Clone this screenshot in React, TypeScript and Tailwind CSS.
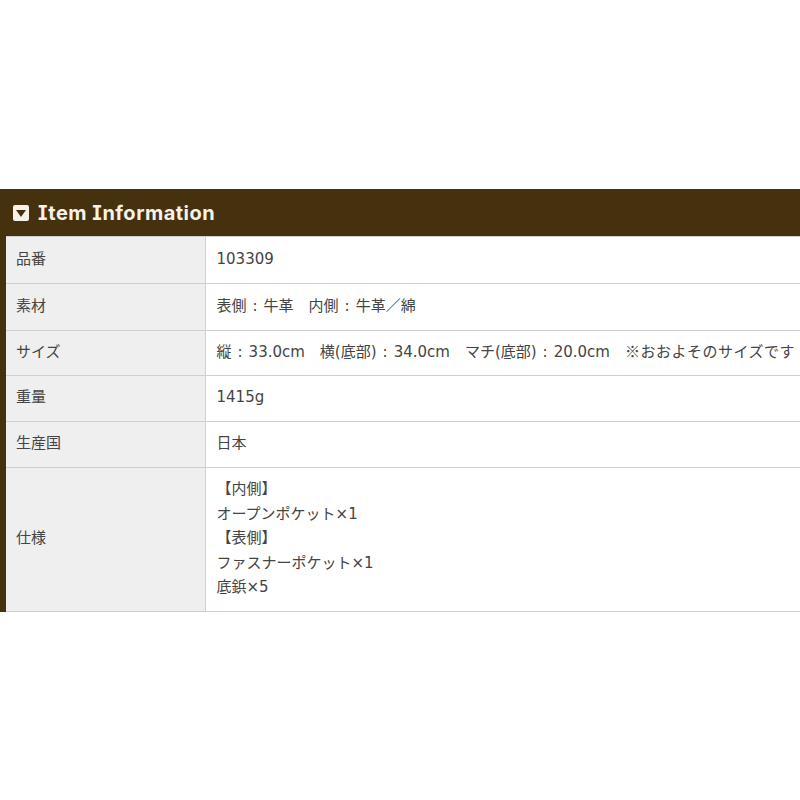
import type { ReactNode } from "react";

const rows: { label: string; height: string; lines: ReactNode[] }[] = [
  { label: "品番", height: "h-[47px]", lines: ["103309"] },
  { label: "素材", height: "h-[47px]", lines: ["表側 : 牛革　内側 : 牛革／綿"] },
  {
    label: "サイズ",
    height: "h-[45px]",
    lines: [
      <>
        {"縦 : 33.0cm　横(底部) : 34.0cm　マチ(底部) : 20.0cm　"}
        <span className="font-['Noto_Sans_CJK_JP',sans-serif] tracking-[0.5px]">※おおよそのサイズです</span>
      </>,
    ],
  },
  { label: "重量", height: "h-[46px]", lines: ["1415g"] },
  { label: "生産国", height: "h-[46px]", lines: ["日本"] },
  {
    label: "仕様",
    height: "h-[144px]",
    lines: ["【内側】", "オープンポケット×1", "【表側】", "ファスナーポケット×1", "底鋲×5"],
  },
];

function CaretBox() {
  return (
    <svg viewBox="0 0 16 16" className="size-4 shrink-0">
      <rect width="16" height="16" rx="2" fill="#f5f2ea" />
      <path d="M3 5h10l-5 7z" fill="#46310f" />
    </svg>
  );
}

export default function App() {
  return (
    <div className="min-h-[800px] bg-white pt-[189px] font-['DejaVu_Sans','Noto_Sans_CJK_JP',sans-serif] text-[15px] text-[#444]">
      <section className="overflow-hidden border-l-[6px] border-[#46310f] bg-white">
        <h2 className="-ml-[6px] flex h-[47px] items-center gap-[9px] bg-[#46310f] pl-[13px] font-['Inter',sans-serif] text-[20px] font-bold tracking-[0.5px] text-[#f5f2ea] [font-feature-settings:'cv08']">
          <CaretBox />
          Item Information
        </h2>
        <div className="border-t border-[#cfcfcf]">
          {rows.map((row) => (
            <div key={row.label} className={`flex border-b border-[#cfcfcf] ${row.height}`}>
              <div className="flex w-[200px] shrink-0 items-center border-r border-[#cfcfcf] bg-[#efefef] pb-[2px] pl-[10px]">
                {row.label}
              </div>
              <div className="flex flex-col justify-center whitespace-nowrap pb-[2px] pl-[10.5px] leading-[24.5px] [word-spacing:1.25px]">
                {row.lines.map((line, i) => (
                  <p key={i}>{line}</p>
                ))}
              </div>
            </div>
          ))}
        </div>
      </section>
    </div>
  );
}
